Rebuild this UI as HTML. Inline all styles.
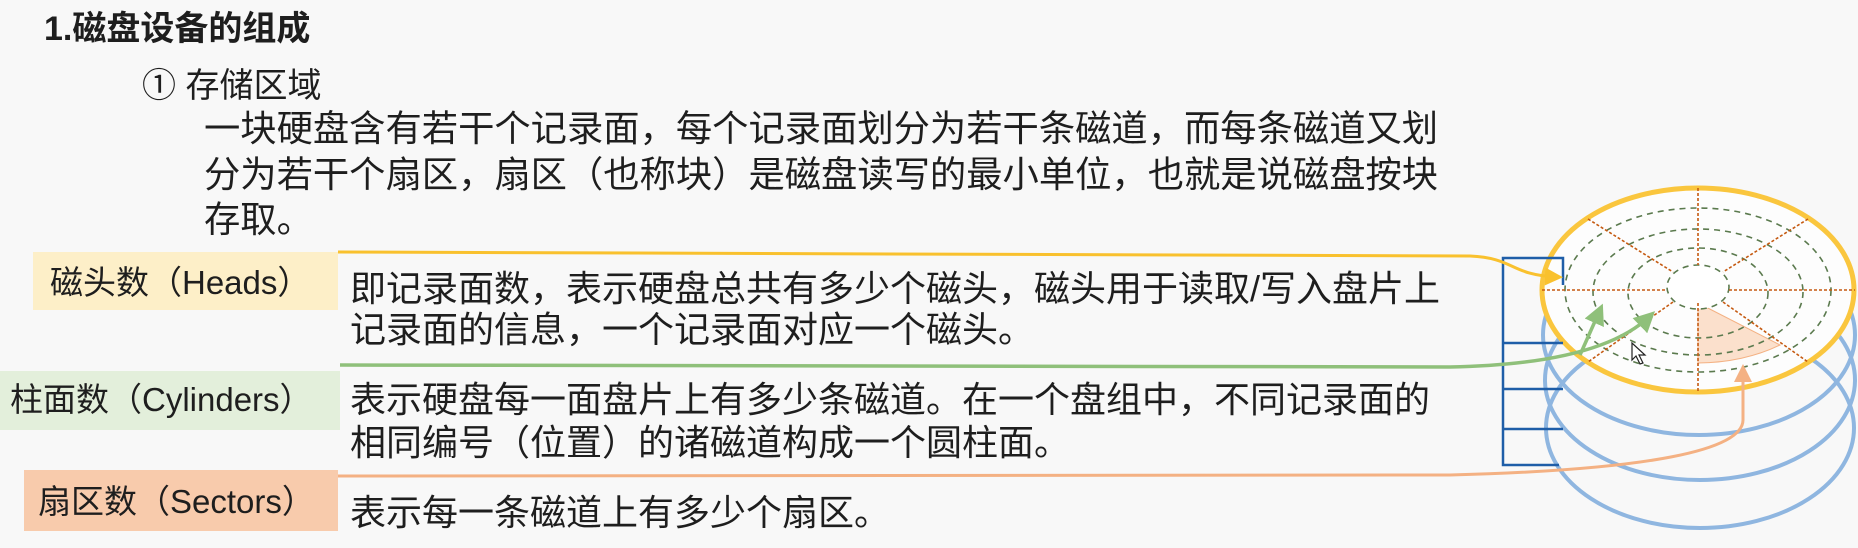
<!DOCTYPE html>
<html><head><meta charset="utf-8">
<style>
html,body{margin:0;padding:0}
body{width:1858px;height:548px;position:relative;overflow:hidden;background:#f8f8f8;font-family:"Liberation Sans","Noto Sans CJK SC",sans-serif;color:#1e1e1e}
.t{position:absolute;white-space:nowrap;line-height:1}
.lab{position:absolute;}
</style></head><body>
<div class="t" style="left:44px;top:12px;font-size:34px;font-weight:bold">1.磁盘设备的组成</div>
<div class="t" style="left:142px;top:69px;font-size:34px">① 存储区域</div>
<div class="t" style="left:204px;top:111px;font-size:36.3px">一块硬盘含有若干个记录面，每个记录面划分为若干条磁道，而每条磁道又划</div>
<div class="t" style="left:204px;top:157px;font-size:36.3px">分为若干个扇区，扇区（也称块）是磁盘读写的最小单位，也就是说磁盘按块</div>
<div class="t" style="left:204px;top:202px;font-size:36.3px">存取。</div>

<div class="lab" style="left:33px;top:252px;width:305px;height:58px;background:#fdefc8"></div>
<div class="t" style="left:50px;top:266px;font-size:33px">磁头数（Heads）</div>
<div class="t" style="left:350px;top:271px;font-size:36px">即记录面数，表示硬盘总共有多少个磁头，磁头用于读取/写入盘片上</div>
<div class="t" style="left:350px;top:312px;font-size:36px">记录面的信息，一个记录面对应一个磁头。</div>

<div class="lab" style="left:0;top:371px;width:340px;height:59px;background:#e3efdb"></div>
<div class="t" style="left:10px;top:383px;font-size:33px">柱面数（Cylinders）</div>
<div class="t" style="left:350px;top:382px;font-size:36px">表示硬盘每一面盘片上有多少条磁道。在一个盘组中，不同记录面的</div>
<div class="t" style="left:350px;top:425px;font-size:36px">相同编号（位置）的诸磁道构成一个圆柱面。</div>

<div class="lab" style="left:24px;top:470px;width:314px;height:61px;background:#f8cbac"></div>
<div class="t" style="left:38px;top:485px;font-size:33px">扇区数（Sectors）</div>
<div class="t" style="left:350px;top:495px;font-size:36px">表示每一条磁道上有多少个扇区。</div>

<svg width="1858" height="548" style="position:absolute;left:0;top:0">
<defs>
<marker id="ay" markerWidth="6" markerHeight="6" refX="4" refY="3" orient="auto"><path d="M0,0 L6,3 L0,6z" fill="#f9c12e"/></marker>
<marker id="ag" markerWidth="6" markerHeight="6" refX="4" refY="3" orient="auto"><path d="M0,0 L6,3 L0,6z" fill="#8fc07a"/></marker>
<marker id="as" markerWidth="6" markerHeight="6" refX="4" refY="3" orient="auto"><path d="M0,0 L6,3 L0,6z" fill="#f4b183"/></marker>
</defs>
<g fill="none" stroke="#8fb6e0" stroke-width="4">
<ellipse cx="1700" cy="428" rx="154" ry="100"/>
<ellipse cx="1700" cy="380" rx="155" ry="100"/>
<ellipse cx="1699" cy="335" rx="156" ry="100"/>
</g>
<ellipse cx="1698" cy="290" rx="156" ry="102" fill="#fdfdfd" stroke="#fac63e" stroke-width="5"/>
<path d="M1698,303 L1698,363 A133,82 0 0 0 1780,345 Z" fill="#fbe0cc" stroke="#f4b183" stroke-width="1"/>
<g fill="none" stroke="#5b7a4e" stroke-width="1.6" stroke-dasharray="6,5">
<ellipse cx="1698" cy="290" rx="133" ry="82"/>
<ellipse cx="1698" cy="292" rx="105" ry="63"/>
<ellipse cx="1698" cy="293" rx="70" ry="45"/>
</g>
<ellipse cx="1698" cy="287" rx="31" ry="22" fill="#fff" stroke="#5b7a4e" stroke-width="1.6" stroke-dasharray="6,5"/>
<g stroke="#c55a11" stroke-width="1.6" stroke-dasharray="3,2">
<line x1="1542" y1="290" x2="1667" y2="290"/><line x1="1729" y1="290" x2="1855" y2="290"/>
<line x1="1698" y1="188" x2="1698" y2="265"/><line x1="1698" y1="303" x2="1698" y2="392"/>
<line x1="1588" y1="219" x2="1673" y2="272"/><line x1="1723" y1="302" x2="1808" y2="362"/>
<line x1="1808" y1="219" x2="1723" y2="272"/><line x1="1673" y1="302" x2="1588" y2="362"/>
</g>
<g fill="none" stroke="#1f5ea8" stroke-width="2.5">
<path d="M1563,285 L1563,258 L1503,258 L1503,465 L1559,465"/>
<line x1="1503" y1="343" x2="1563" y2="343"/>
<line x1="1503" y1="389" x2="1563" y2="389"/>
<line x1="1503" y1="429" x2="1563" y2="429"/>
</g>
<path d="M338,252 L1470,256 C1515,258 1510,275 1557,277" fill="none" stroke="#f9c12e" stroke-width="3" marker-end="url(#ay)"/>
<path d="M340,365 L1450,367 C1560,365 1620,345 1650,316" fill="none" stroke="#8fc07a" stroke-width="3.5" marker-end="url(#ag)"/>
<path d="M1580,355 L1600,310" fill="none" stroke="#8fc07a" stroke-width="3.5" marker-end="url(#ag)"/>
<path d="M338,476 L1450,475 C1650,470 1743,450 1743,420 L1743,370" fill="none" stroke="#f4b183" stroke-width="3" marker-end="url(#as)"/>
<path d="M1632,343 l0,17 l4,-4 l4,8 l3,-1 l-4,-8 l6,0 z" fill="#fff" stroke="#222" stroke-width="1.2"/>
</svg>
</body></html>
